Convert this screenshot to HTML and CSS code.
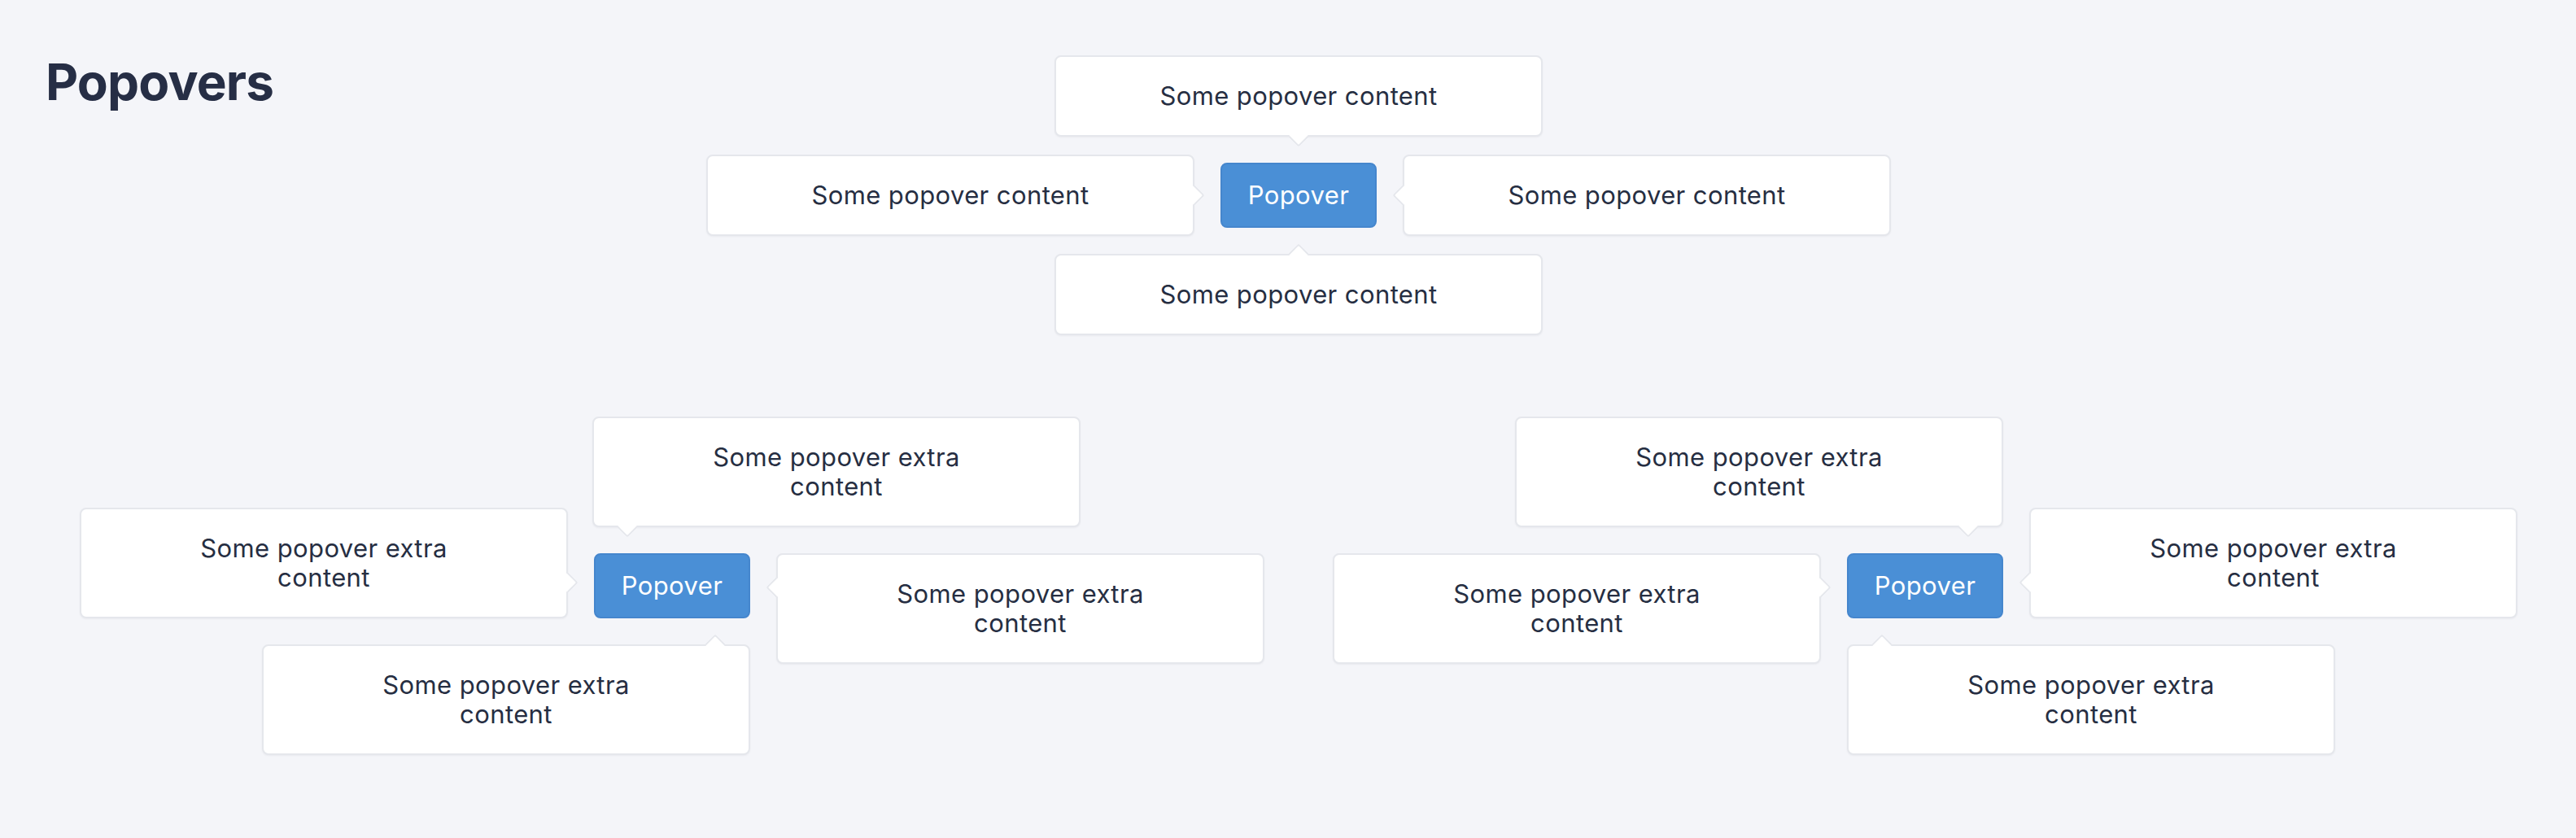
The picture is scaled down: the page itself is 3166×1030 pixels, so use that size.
FILE: index.html
```html
<!DOCTYPE html>
<html lang="en">
<head>
<meta charset="utf-8">
<title>Popovers</title>
<link rel="stylesheet" href="styles.css">
</head>
<body>
<main class="page">
  <h1 class="title">Popovers</h1>

  <section class="demo-center">
    <div class="anchor">
      <button class="btn" type="button">Popover</button>
      <div class="pop pop-top pos-top-center"><span class="arrow arrow-down arrow-center-x"></span>Some popover content</div>
      <div class="pop pop-left pos-left-center"><span class="arrow arrow-right arrow-center-y"></span>Some popover content</div>
      <div class="pop pop-right pos-right-center"><span class="arrow arrow-left arrow-center-y"></span>Some popover content</div>
      <div class="pop pop-bottom pos-bottom-center"><span class="arrow arrow-up arrow-center-x"></span>Some popover content</div>
    </div>
  </section>

  <section class="demo-row">
    <div class="demo-cell">
      <div class="anchor">
        <button class="btn" type="button">Popover</button>
        <div class="pop pop-top pos-start-x"><span class="arrow arrow-down arrow-start-x"></span>Some popover extra content</div>
        <div class="pop pop-left pos-end-y"><span class="arrow arrow-right arrow-end-y"></span>Some popover extra content</div>
        <div class="pop pop-right pos-start-y"><span class="arrow arrow-left arrow-start-y"></span>Some popover extra content</div>
        <div class="pop pop-bottom pos-end-x"><span class="arrow arrow-up arrow-end-x"></span>Some popover extra content</div>
      </div>
    </div>
    <div class="demo-cell">
      <div class="anchor">
        <button class="btn" type="button">Popover</button>
        <div class="pop pop-top pos-end-x"><span class="arrow arrow-down arrow-end-x"></span>Some popover extra content</div>
        <div class="pop pop-left pos-start-y"><span class="arrow arrow-right arrow-start-y"></span>Some popover extra content</div>
        <div class="pop pop-right pos-end-y"><span class="arrow arrow-left arrow-end-y"></span>Some popover extra content</div>
        <div class="pop pop-bottom pos-start-x"><span class="arrow arrow-up arrow-start-x"></span>Some popover extra content</div>
      </div>
    </div>
  </section>
</main>
</body>
</html>
```
FILE: styles.css
```css
* { box-sizing: border-box; }

html, body {
  margin: 0;
  padding: 0;
  background: #f4f5f9;
}

body {
  font-family: Inter, "Noto Sans", "Liberation Sans", sans-serif;
  color: #262e42;
  min-height: 1030px;
}

.page {
  padding: 61px 0 0 56px;
  width: 3136px;
}

.title {
  margin: 0;
  font-size: 62px;
  line-height: 80px;
  font-weight: 700;
  color: #262e45;
  letter-spacing: -0.8px;
}

.demo-center {
  display: flex;
  justify-content: center;
  margin-top: 59px;
}

.demo-row {
  display: grid;
  grid-template-columns: 1540px 1540px;
  margin-top: 400px;
}

.demo-cell {
  display: flex;
  justify-content: center;
}

.anchor {
  position: relative;
  width: 192px;
  height: 80px;
}

.btn {
  display: block;
  width: 192px;
  height: 80px;
  margin: 0;
  padding: 0;
  border: 2px solid #4586cd;
  border-radius: 8px;
  background: #4a8fd6;
  color: #ffffff;
  font-family: Inter, "Noto Sans", "Liberation Sans", sans-serif;
  font-size: 31px;
  letter-spacing: 0.4px;
  line-height: 36px;
  font-weight: 400;
}

.pop {
  position: absolute;
  width: 600px;
  padding: 30px 116px;
  background: #ffffff;
  border: 2px solid #e5e7ec;
  border-radius: 8px;
  box-shadow: 0 1px 2px rgba(30, 40, 60, 0.05);
  font-size: 31px;
  letter-spacing: 0.4px;
  line-height: 36px;
  text-align: center;
  color: #262e42;
  z-index: 1;
}

/* placement: centered */
.pos-top-center { bottom: calc(100% + 32px); left: 50%; transform: translateX(-50%); }
.pos-bottom-center { top: calc(100% + 32px); left: 50%; transform: translateX(-50%); }
.pos-left-center { right: calc(100% + 32px); top: 50%; transform: translateY(-50%); }
.pos-right-center { left: calc(100% + 32px); top: 50%; transform: translateY(-50%); }

/* placement: vertical sides */
.pop-top.pos-start-x { bottom: calc(100% + 32px); left: -2px; }
.pop-top.pos-end-x { bottom: calc(100% + 32px); right: 0; }
.pop-bottom.pos-start-x { top: calc(100% + 32px); left: 0; }
.pop-bottom.pos-end-x { top: calc(100% + 32px); right: 0; }

/* placement: horizontal sides */
.pop-left.pos-start-y { right: calc(100% + 32px); top: 0; }
.pop-left.pos-end-y { right: calc(100% + 32px); bottom: 0; }
.pop-right.pos-start-y { left: calc(100% + 32px); top: 0; }
.pop-right.pos-end-y { left: calc(100% + 32px); bottom: 0; }

/* arrows */
.arrow {
  position: absolute;
  width: 18px;
  height: 18px;
  background: #ffffff;
  border: 0 solid #e5e7ec;
  transform: rotate(45deg);
}

.arrow-down {
  bottom: -11px;
  border-right-width: 2px;
  border-bottom-width: 2px;
  border-bottom-right-radius: 3px;
}

.arrow-up {
  top: -11px;
  border-top-width: 2px;
  border-left-width: 2px;
  border-top-left-radius: 3px;
}

.arrow-right {
  right: -11px;
  border-top-width: 2px;
  border-right-width: 2px;
  border-top-right-radius: 3px;
}

.arrow-left {
  left: -11px;
  border-bottom-width: 2px;
  border-left-width: 2px;
  border-bottom-left-radius: 3px;
}

.arrow-center-x { left: calc(50% - 9px); }
.arrow-center-y { top: calc(50% - 9px); }
.arrow-start-x { left: 32px; }
.arrow-end-x { right: 32px; }
.arrow-start-y { top: 31px; }
.arrow-end-y { bottom: 33px; }
```
